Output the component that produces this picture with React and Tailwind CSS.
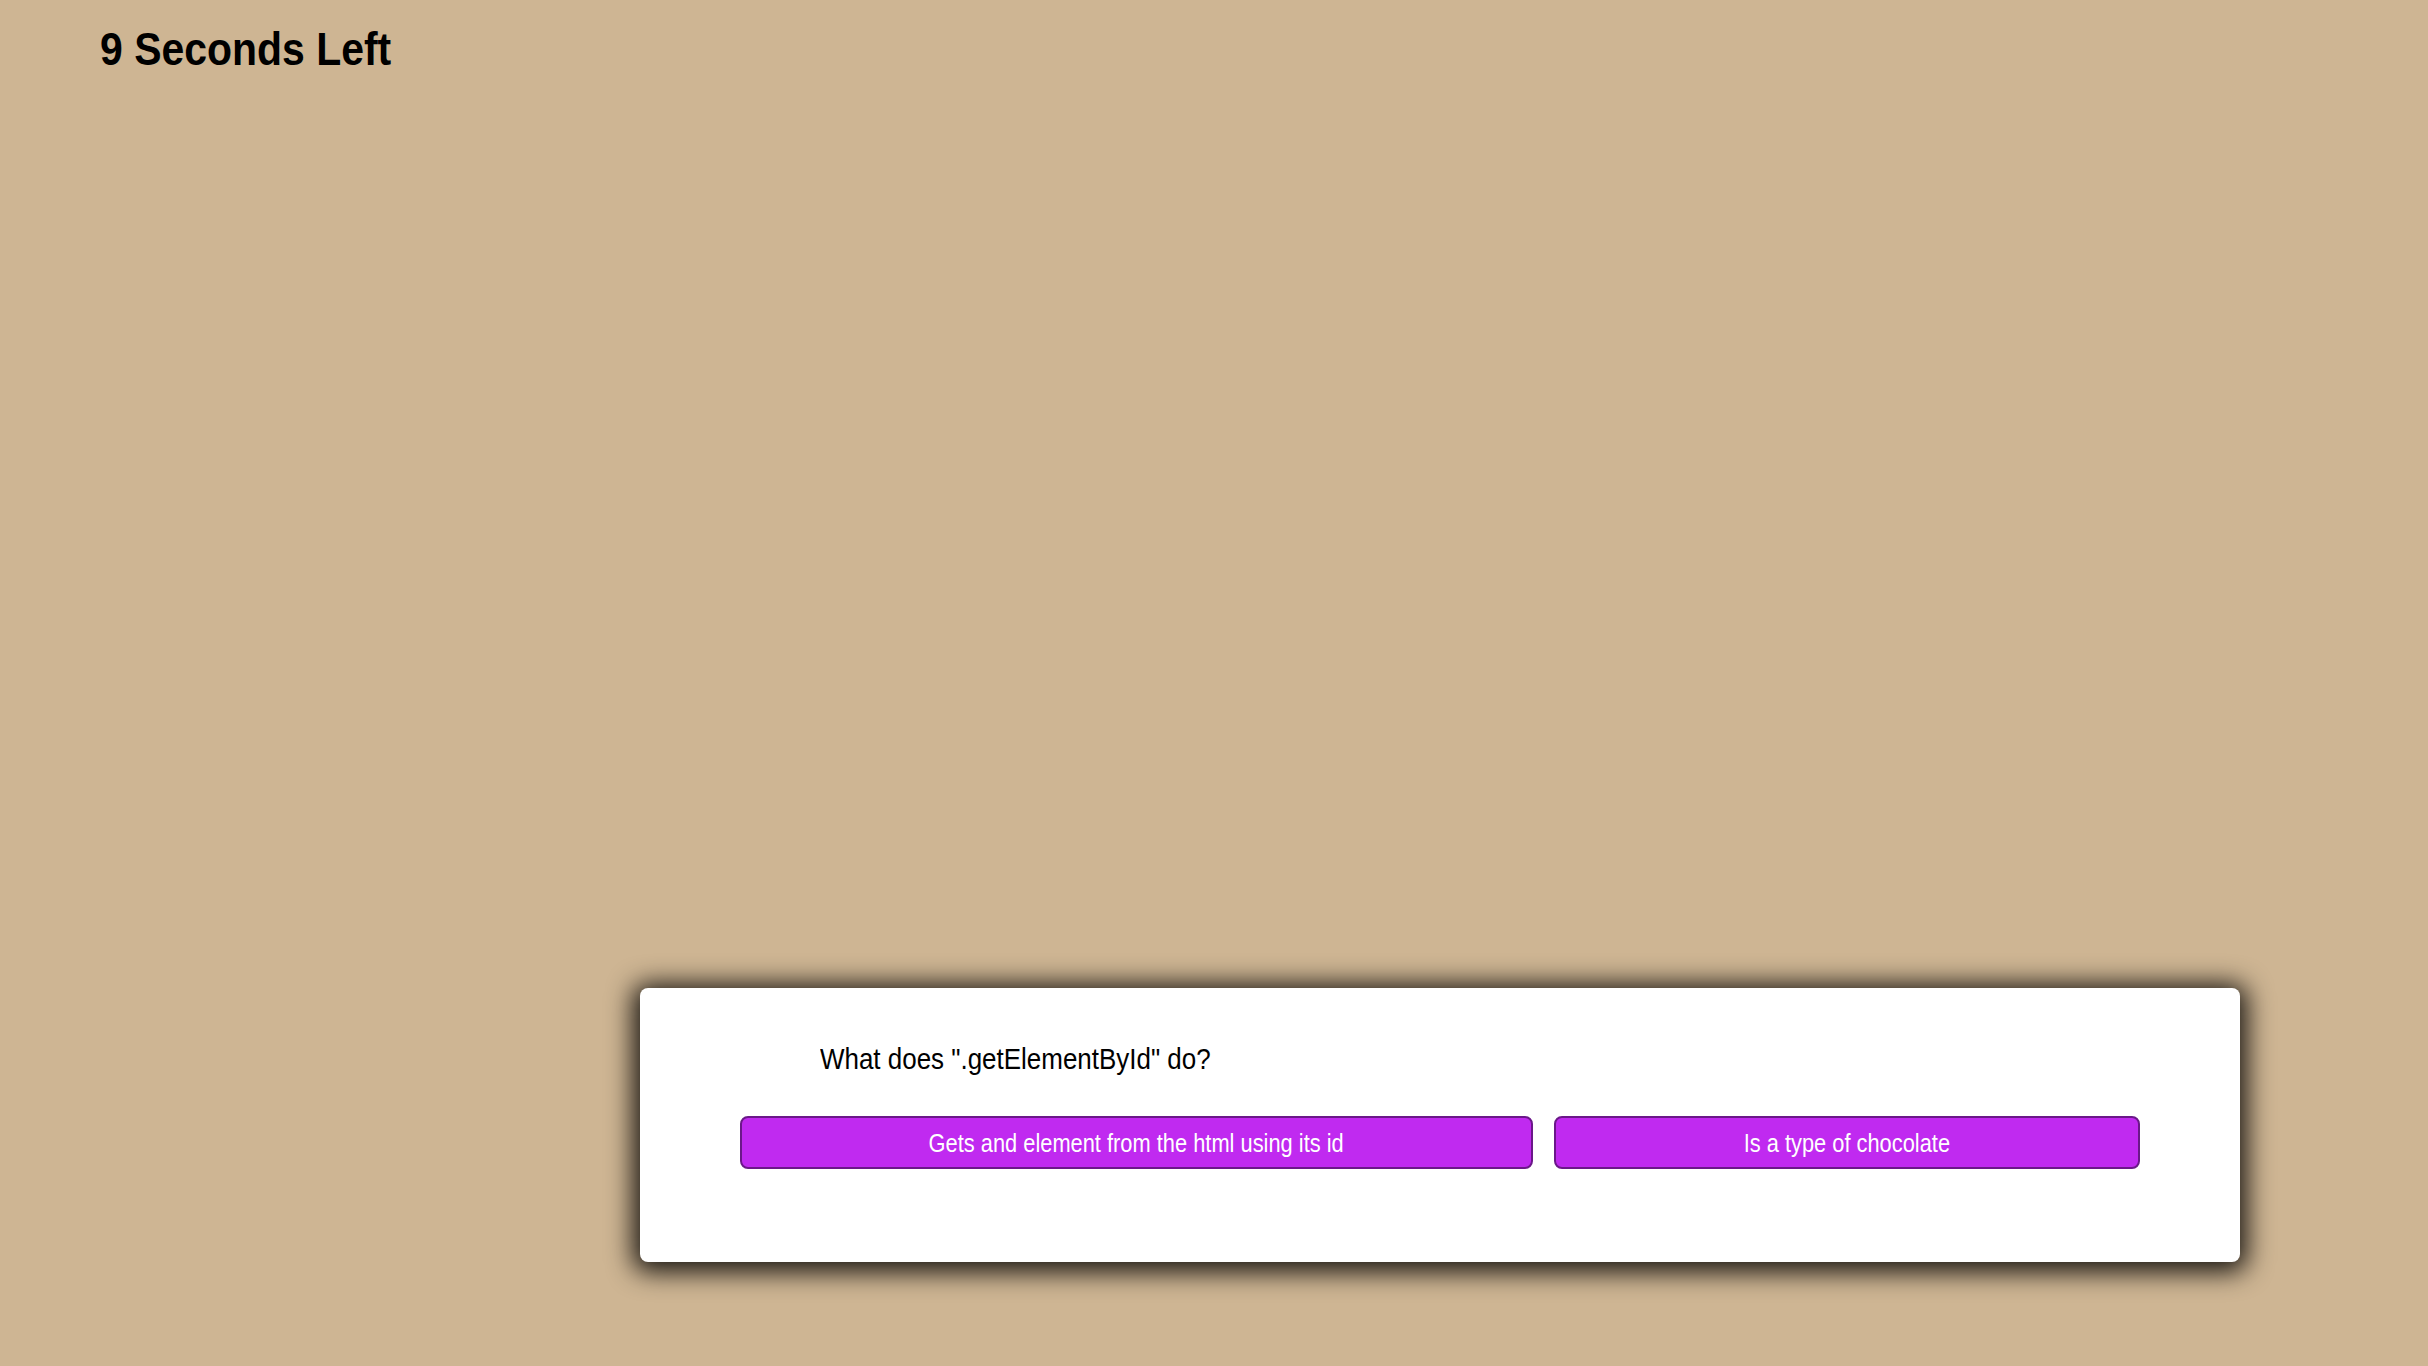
import React from "react";

const answers = ["Gets and element from the html using its id", "Is a type of chocolate"];

function App() {
  return (
    <div className="min-h-screen bg-[#ceb593] font-['Liberation_Sans',Arial,sans-serif] text-black">
      <h1 className="pl-[100px] pt-[26px] text-[46px] font-bold leading-none">
        <span className="inline-block origin-left scale-x-[0.89]">9 Seconds Left</span>
      </h1>

      <div className="ml-[640px] mt-[916px] w-[1600px] rounded-lg bg-white px-[100px] pt-[56px] pb-[93px] shadow-[0_3px_26px_7px_rgba(0,0,0,0.88)]">
        <p className="pl-[80px] text-[30px] leading-none">
          <span className="inline-block origin-left scale-x-[0.865]">What does ".getElementById" do?</span>
        </p>

        <div className="mt-[42px] grid grid-cols-[793px_1fr] gap-[21px]">
          {answers.map((a) => (
            <button
              key={a}
              className="h-[53px] rounded-lg border-2 border-[#6b1889] bg-[#c02af0] text-[26px] leading-none text-white"
            >
              <span className="inline-block scale-x-[0.84]">{a}</span>
            </button>
          ))}
        </div>
      </div>
    </div>
  );
}

export default App;
